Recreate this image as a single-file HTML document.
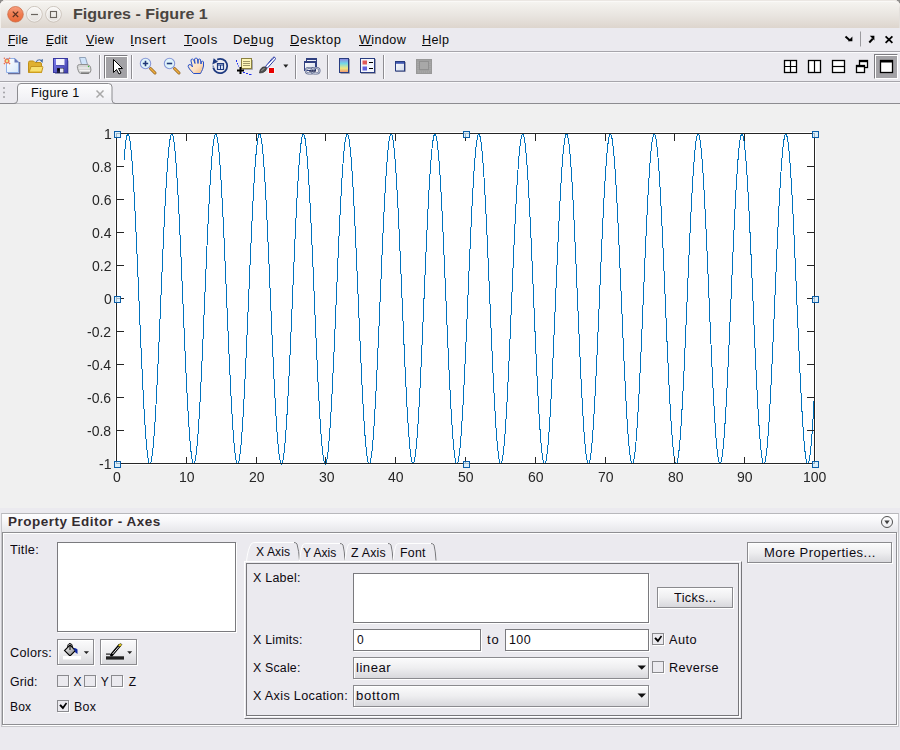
<!DOCTYPE html>
<html><head><meta charset="utf-8"><style>
html,body{margin:0;padding:0;width:900px;height:750px;overflow:hidden;background:#ebeaef;}
body{position:relative;font-family:"Liberation Sans",sans-serif;}
.t{position:absolute;line-height:1;white-space:pre;}
svg{overflow:visible}
</style></head><body>
<div style="position:absolute;left:0px;top:0px;width:8px;height:8px;background:#8e8c8a"></div>
<div style="position:absolute;left:892px;top:0px;width:8px;height:8px;background:#8e8c8a"></div>
<div style="position:absolute;left:0px;top:0px;width:900px;height:28px;background:linear-gradient(#f7f6f3,#f2f0ec 18%,#e9e5e0 55%,#ddd5cd);border-radius:6px 6px 0 0;box-shadow:inset 0 1px 0 #ebe7e3, inset 0 2px 0 #faf9f7, inset 1px 0 0 #f2efeb, inset -1px 0 0 #e4e0dc"></div>
<svg style="position:absolute;left:0;top:0" width="70" height="28">
<defs><linearGradient id="cg" x1="0" y1="0" x2="0" y2="1"><stop offset="0" stop-color="#f7a080"/><stop offset="0.5" stop-color="#f07c50"/><stop offset="1" stop-color="#e86838"/></linearGradient>
<linearGradient id="gg" x1="0" y1="0" x2="0" y2="1"><stop offset="0" stop-color="#faf9f7"/><stop offset="1" stop-color="#e4e0dc"/></linearGradient></defs>
<circle cx="15.5" cy="14.3" r="7.8" fill="url(#cg)" stroke="#c8643c" stroke-width="0.7"/>
<path d="M12.8 11.6 L18.2 17 M18.2 11.6 L12.8 17" stroke="#5a3020" stroke-width="1.2"/>
<circle cx="34.4" cy="14.3" r="7.8" fill="url(#gg)" stroke="#c4bbb2" stroke-width="0.9"/>
<circle cx="34.4" cy="14.3" r="6.9" fill="none" stroke="#fff" stroke-width="0.8" opacity="0.7"/>
<path d="M31 14.5 H38" stroke="#6a645e" stroke-width="1.2"/>
<circle cx="53.5" cy="14.3" r="7.8" fill="url(#gg)" stroke="#c4bbb2" stroke-width="0.9"/>
<circle cx="53.5" cy="14.3" r="6.9" fill="none" stroke="#fff" stroke-width="0.8" opacity="0.7"/>
<rect x="50.5" y="11.5" width="6" height="6" fill="none" stroke="#6a645e" stroke-width="1.1"/>
</svg>
<div class="t" style="left:73.30px;top:6.75px;font-size:14px;letter-spacing:0.000px;font-weight:bold;color:#4a4540;transform:scaleX(1.1472);transform-origin:0 0;">Figures - Figure 1</div>
<div style="position:absolute;left:0px;top:28px;width:900px;height:23px;background:#ebeaef"></div>
<div style="position:absolute;left:0px;top:51px;width:900px;height:1px;background:#a6a5ab"></div>
<div style="position:absolute;left:0px;top:52px;width:900px;height:1px;background:#fbfbfd"></div>
<div class="t" style="left:7.70px;top:33.84px;font-size:12px;letter-spacing:0.121px;font-weight:normal;color:#080808;transform:scaleX(1.0188);transform-origin:0 0;">File</div>
<div class="t" style="left:45.50px;top:33.84px;font-size:12px;letter-spacing:0.140px;font-weight:normal;color:#080808;transform:scaleX(1.0201);transform-origin:0 0;">Edit</div>
<div class="t" style="left:85.60px;top:33.84px;font-size:12px;letter-spacing:0.317px;font-weight:normal;color:#080808;transform:scaleX(1.0378);transform-origin:0 0;">View</div>
<div class="t" style="left:129.80px;top:33.84px;font-size:12px;letter-spacing:0.514px;font-weight:normal;color:#080808;transform:scaleX(1.0947);transform-origin:0 0;">Insert</div>
<div class="t" style="left:183.50px;top:33.84px;font-size:12px;letter-spacing:0.593px;font-weight:normal;color:#080808;transform:scaleX(1.0926);transform-origin:0 0;">Tools</div>
<div class="t" style="left:233.30px;top:33.84px;font-size:12px;letter-spacing:0.617px;font-weight:normal;color:#080808;transform:scaleX(1.0766);transform-origin:0 0;">Debug</div>
<div class="t" style="left:289.90px;top:33.84px;font-size:12px;letter-spacing:0.544px;font-weight:normal;color:#080808;transform:scaleX(1.0795);transform-origin:0 0;">Desktop</div>
<div class="t" style="left:358.70px;top:33.84px;font-size:12px;letter-spacing:0.399px;font-weight:normal;color:#080808;transform:scaleX(1.0487);transform-origin:0 0;">Window</div>
<div class="t" style="left:421.90px;top:33.84px;font-size:12px;letter-spacing:0.381px;font-weight:normal;color:#080808;transform:scaleX(1.0479);transform-origin:0 0;">Help</div>
<div style="position:absolute;left:8px;top:45px;width:7px;height:1px;background:#080808"></div>
<div style="position:absolute;left:46px;top:45px;width:6px;height:1px;background:#080808"></div>
<div style="position:absolute;left:86px;top:45px;width:8px;height:1px;background:#080808"></div>
<div style="position:absolute;left:131px;top:45px;width:3px;height:1px;background:#080808"></div>
<div style="position:absolute;left:184px;top:45px;width:8px;height:1px;background:#080808"></div>
<div style="position:absolute;left:250px;top:45px;width:7px;height:1px;background:#080808"></div>
<div style="position:absolute;left:290px;top:45px;width:9px;height:1px;background:#080808"></div>
<div style="position:absolute;left:359px;top:45px;width:13px;height:1px;background:#080808"></div>
<div style="position:absolute;left:422px;top:45px;width:9px;height:1px;background:#080808"></div>
<svg style="position:absolute;left:840px;top:30px" width="60" height="20">
<path d="M5.5 6.5 L10 10.5" stroke="#000" stroke-width="2"/>
<path d="M7.8 11.2 H12.4 V6.6 Z" fill="#000"/>
<path d="M20.5 1.5 V16.5" stroke="#9a9a9e" stroke-width="1"/>
<path d="M29.3 12.5 L32.8 8.8" stroke="#000" stroke-width="2"/>
<path d="M29.8 5.8 H34.4 V10.4 Z" fill="#000"/>
<path d="M45.6 6.4 L52.4 12.8 M52.4 6.4 L45.6 12.8" stroke="#000" stroke-width="1.8"/>
</svg>
<div style="position:absolute;left:0px;top:53px;width:900px;height:28px;background:#ebeaef"></div>
<div style="position:absolute;left:0px;top:81px;width:900px;height:1px;background:#a6a5ab"></div>
<div style="position:absolute;left:0px;top:82px;width:900px;height:1px;background:#f8f8fa"></div>
<div style="position:absolute;left:99px;top:55px;width:1px;height:24px;background:#8e8d92"></div>
<div style="position:absolute;left:100px;top:55px;width:1px;height:24px;background:#fdfdff"></div>
<div style="position:absolute;left:131px;top:55px;width:1px;height:24px;background:#8e8d92"></div>
<div style="position:absolute;left:132px;top:55px;width:1px;height:24px;background:#fdfdff"></div>
<div style="position:absolute;left:295px;top:55px;width:1px;height:24px;background:#8e8d92"></div>
<div style="position:absolute;left:296px;top:55px;width:1px;height:24px;background:#fdfdff"></div>
<div style="position:absolute;left:327px;top:55px;width:1px;height:24px;background:#8e8d92"></div>
<div style="position:absolute;left:328px;top:55px;width:1px;height:24px;background:#fdfdff"></div>
<div style="position:absolute;left:383px;top:55px;width:1px;height:24px;background:#8e8d92"></div>
<div style="position:absolute;left:384px;top:55px;width:1px;height:24px;background:#fdfdff"></div>
<div style="position:absolute;left:104px;top:55px;width:24px;height:24px;background:#a3a2a6;border-top:1px solid #7c7b80;border-left:1px solid #7c7b80;border-right:1px solid #fff;border-bottom:1px solid #fff;box-sizing:border-box;box-shadow:inset 1px 1px 0 #fff"></div>
<div style="position:absolute;left:874px;top:54px;width:24px;height:25px;background:#a3a2a6;border-top:1px solid #7c7b80;border-left:1px solid #7c7b80;border-right:1px solid #fff;border-bottom:1px solid #fff;box-sizing:border-box;box-shadow:inset 1px 1px 0 #fff"></div>
<svg style="position:absolute;left:0;top:52px" width="900" height="30">
<defs>
<linearGradient id="pg" x1="0" y1="0" x2="1" y2="1"><stop offset="0" stop-color="#ffffff"/><stop offset="1" stop-color="#d8e8fa"/></linearGradient>
<linearGradient id="fl" x1="0" y1="0" x2="1" y2="1"><stop offset="0" stop-color="#8080f0"/><stop offset="1" stop-color="#4040a8"/></linearGradient>
<linearGradient id="cb" x1="0" y1="0" x2="0" y2="1"><stop offset="0" stop-color="#9080e0"/><stop offset="0.35" stop-color="#70d8e8"/><stop offset="0.7" stop-color="#f0e880"/><stop offset="1" stop-color="#f09070"/></linearGradient>
<linearGradient id="wb" x1="0" y1="0" x2="1" y2="1"><stop offset="0" stop-color="#ffffff"/><stop offset="1" stop-color="#d0d8e8"/></linearGradient>
</defs>
<!-- new file -->
<path d="M8 21.5 H19.5 V10" stroke="#6a6e98" stroke-width="1.6" fill="none"/>
<path d="M6.5 6.5 H15 L18.5 10 V20.5 H6.5 Z" fill="url(#pg)" stroke="#90b0e8"/>
<path d="M14.5 6 V10.5 H19 Z" fill="#6676b8"/>
<circle cx="7" cy="9" r="1.9" fill="#e8e890" stroke="#f07850" stroke-width="1.4"/>
<circle cx="4.4" cy="6.3" r="0.8" fill="#e87050"/><circle cx="9.6" cy="6.3" r="0.8" fill="#e87050"/>
<circle cx="4.4" cy="11.6" r="0.8" fill="#e87050"/><circle cx="9.6" cy="11.6" r="0.8" fill="#e87050"/>
<!-- open folder -->
<path d="M28.5 20.5 V10.5 Q28.5 9 30 9 H33.5 L35 10.5 H40 Q41.5 10.5 41.5 12 V20.5 Z" fill="#e0b030" stroke="#c09018"/>
<path d="M29 20.5 L31 14.5 H42.5 Q43 14.5 42.8 15.5 L41.5 20.5 Z" fill="#f8e070" stroke="#c49420"/>
<path d="M30 20 H41" stroke="#d8a820" stroke-width="1"/>
<path d="M36 10 Q38.5 6.5 41.5 8.5" stroke="#5878a8" stroke-width="1.1" fill="none"/>
<path d="M40 8.5 L43 7 L42.5 11 Z" fill="#4068a0"/>
<!-- save -->
<path d="M55 21.5 H68 V8.5" stroke="#6a6e98" stroke-width="1.2" fill="none" opacity="0.7"/>
<rect x="53.5" y="6.5" width="14" height="14" fill="url(#fl)" stroke="#3838a0"/>
<rect x="56" y="7" width="8.5" height="6.5" fill="#f4f4fc"/>
<path d="M56 13.5 H64.5" stroke="#5050b0"/>
<rect x="57" y="16" width="7" height="5" fill="#202040"/>
<rect x="60" y="16.5" width="3.5" height="4" fill="#e8e8f4"/>
<rect x="57.5" y="16.5" width="2" height="2" fill="#000"/>
<!-- print -->
<path d="M79.5 5.5 L85.5 5.5 L87.5 12.5 L81.5 12.5 Z" fill="#d0e4fa" stroke="#8898b0" stroke-width="0.9"/>
<path d="M78 13 Q77 14 77.5 16.5 L79 20.5 Q80 21.5 82 21.5 H88 Q91 21 91 18 L90.5 15 Q90 13 87 12.5 H81 Q79 12.5 78 13 Z" fill="#d4d4d4" stroke="#8a8a8a" stroke-width="0.9"/>
<path d="M79 16 H89.5 M79.5 18.5 H90" stroke="#f4f4f4" stroke-width="1"/>
<path d="M81 21 H89" stroke="#606060" stroke-width="1"/>
<circle cx="88.5" cy="14.5" r="0.7" fill="#30c030"/>
<!-- pointer arrow -->
<path d="M113.5 7.5 V20.5 L116.5 17.5 L119 22 L121 21 L118.5 16.5 H122.5 Z" fill="#fff" stroke="#000" stroke-width="1"/>
<!-- zoom in -->
<path d="M150.5 16.5 L155 21" stroke="#906020" stroke-width="3" stroke-linecap="round"/>
<path d="M150.5 16.5 L155 21" stroke="#f0b040" stroke-width="1.6" stroke-linecap="round"/>
<circle cx="145.5" cy="11.5" r="5.2" fill="#e0f4fa" stroke="#8898d8" stroke-width="1.1"/>
<path d="M142.8 11.5 H148.2 M145.5 8.8 V14.2" stroke="#203878" stroke-width="1.6"/>
<!-- zoom out -->
<path d="M174.5 16.5 L179 21" stroke="#906020" stroke-width="3" stroke-linecap="round"/>
<path d="M174.5 16.5 L179 21" stroke="#f0b040" stroke-width="1.6" stroke-linecap="round"/>
<circle cx="169.5" cy="11.5" r="5.2" fill="#e0f4fa" stroke="#8898d8" stroke-width="1.1"/>
<path d="M166.8 11.5 H172.2" stroke="#203878" stroke-width="1.6"/>
<!-- pan hand -->
<defs><linearGradient id="hd" x1="0" y1="0" x2="1" y2="1"><stop offset="0" stop-color="#fff4dc"/><stop offset="0.6" stop-color="#fde0c4"/><stop offset="1" stop-color="#f0b878"/></linearGradient></defs>
<path d="M193.5 21.5 L189.5 17 L188.2 14.5 L188.5 13 L190 12.5 L191.5 13.5 L192.5 15 L191 9 L191.2 7.5 L192.5 7 L193.8 8 L195 11.5 L194.5 7 L195.3 6.2 L196.8 6.2 L197.5 7 L198 11.5 L198.3 7.5 L199.3 7 L200.5 7.5 L201 12 L201.5 9.5 L202.5 9 L203.5 10 L203.5 14 L202.5 17.5 L201.5 19.5 L200.5 21.5 Z" fill="url(#hd)" stroke="#2850c8" stroke-width="1" stroke-linejoin="round"/>
<!-- rotate -->
<path d="M217.2 7.6 A7.1 7.1 0 1 1 213.3 15.8" stroke="#1e3a80" stroke-width="1.8" fill="none"/>
<path d="M213.6 15.8 A7.1 7.1 0 0 1 213.1 13.5" stroke="#8090b8" stroke-width="1.6" fill="none"/>
<path d="M213.7 6.3 L218 9.8 L212.3 12.6 Z" fill="#1e3a80"/>
<path d="M217.5 11.5 H223.5 V17.5 H217.5 Z" fill="#dce6f8" stroke="#1e3a80" stroke-width="1.2"/>
<path d="M218 13 H223 M220.5 13 V17.5" stroke="#1e3a80" stroke-width="1"/>
<!-- data cursor -->
<path d="M243 17.5 H252.5 V8" stroke="#a8a8b0" stroke-width="1" fill="none"/>
<rect x="241.5" y="6.5" width="10" height="10" fill="#fdf6b8" stroke="#8a8040"/>
<path d="M243 9.5 H250 M243 11.5 H250 M243 13.5 H250" stroke="#a09868"/>
<path d="M236.5 8 V10 M237.5 11 V12.5 M238.5 13.5 V14.5" stroke="#2030f0" stroke-width="1"/>
<path d="M243 20.5 H245 M246 21.5 H248 M249 22.5 H251.5" stroke="#2030f0" stroke-width="1"/>
<path d="M237 18.5 H244 M240.5 15 V22" stroke="#000" stroke-width="2"/>
<!-- brush -->
<path d="M265.5 14.5 L273 5.5 Q274 4.5 275 5.5 Q276 6.5 275 7.5 L267.5 16 Z" fill="#ffffff" stroke="#2838a0" stroke-width="1"/>
<path d="M266.5 13.5 L274 6" stroke="#6878d0" stroke-width="0.9"/>
<path d="M259.5 21 Q259.5 17.5 262 15.5 Q264.5 14 266.5 16 Q267 18.5 263 20.5 Z" fill="#505050" stroke="#303030" stroke-width="0.7"/>
<path d="M261.5 19 Q262.5 17 264.5 16.5" stroke="#c0c0c0" stroke-width="0.7" fill="none"/>
<rect x="268.5" y="15.5" width="6" height="6" fill="#fff"/>
<rect x="269" y="16" width="5" height="5" fill="#e80000"/>
<path d="M283.3 12.6 H288.3 L285.8 15.8 Z" fill="#222"/>
<!-- link -->
<rect x="306.5" y="6.5" width="10" height="9" fill="url(#wb)" stroke="#304080"/>
<rect x="306.5" y="6.5" width="10" height="1.5" fill="#304080"/>
<rect x="304.5" y="9.5" width="11" height="9" fill="url(#wb)" stroke="#304080"/>
<rect x="304.5" y="9.5" width="11" height="1.5" fill="#304080"/>
<rect x="305.8" y="16" width="8" height="5.5" rx="2.7" fill="none" stroke="#5a6488" stroke-width="2"/>
<rect x="305.8" y="16" width="8" height="5.5" rx="2.7" fill="none" stroke="#d8e0ee" stroke-width="0.8"/>
<rect x="311.5" y="16" width="8" height="5.5" rx="2.7" fill="none" stroke="#5a6488" stroke-width="2"/>
<rect x="311.5" y="16" width="8" height="5.5" rx="2.7" fill="none" stroke="#d8e0ee" stroke-width="0.8"/>
<path d="M309 19 H316" stroke="#202850" stroke-width="1.2"/>
<!-- colorbar -->
<path d="M340.5 21.5 H349.5 V7" stroke="#a0a0b0" stroke-width="1" fill="none"/>
<rect x="339.5" y="6.5" width="9" height="14" fill="url(#cb)" stroke="#283c80"/>
<!-- legend -->
<path d="M361 21.5 H375.5 V7" stroke="#a0a0b0" stroke-width="1" fill="none"/>
<rect x="360.5" y="6.5" width="14" height="14" fill="#f4f6fc" stroke="#283c80"/>
<rect x="362.5" y="8.5" width="4.5" height="4" fill="#e05858"/>
<rect x="362.5" y="14.5" width="4.5" height="4" fill="#6060e0"/>
<path d="M369 10.5 H373 M369 16.5 H373" stroke="#000" stroke-width="1.2"/>
<!-- dock window -->
<path d="M396 19.5 H405.5 V10" stroke="#a0a0b0" stroke-width="1" fill="none"/>
<rect x="395.5" y="9.5" width="9" height="9.5" fill="url(#wb)" stroke="#283c80"/>
<rect x="396" y="10" width="8" height="1.8" fill="#4058b0"/>
<!-- gray -->
<rect x="416.5" y="7.5" width="15" height="14" fill="#a0a0a0" stroke="#989898"/>
<rect x="419.5" y="9.5" width="9" height="8" fill="#a8a8a8" stroke="#909090"/>
<path d="M418 10 V19 M430 10 V19 M418 20 H430" stroke="#b0b0b0" stroke-width="0.8" stroke-dasharray="1 1"/>
<!-- layout buttons -->
<rect x="784.5" y="8.5" width="12" height="12" fill="#fff" stroke="#000" stroke-width="1.3"/>
<path d="M790.5 8.5 V20.5 M784.5 14.5 H796.5" stroke="#000" stroke-width="1.2"/>
<rect x="808.5" y="8.5" width="12" height="12" fill="#fff" stroke="#000" stroke-width="1.3"/>
<path d="M814.5 8.5 V20.5" stroke="#000" stroke-width="1.2"/>
<rect x="832.5" y="8.5" width="12" height="12" fill="#fff" stroke="#000" stroke-width="1.3"/>
<path d="M832.5 14.5 H844.5" stroke="#000" stroke-width="1.2"/>
<rect x="859.5" y="8.5" width="8" height="7" fill="#fff" stroke="#000" stroke-width="1.3"/>
<rect x="859" y="8" width="9" height="2.2" fill="#000"/>
<rect x="856.5" y="13.5" width="8" height="7" fill="#fff" stroke="#000" stroke-width="1.3"/>
<rect x="856" y="13" width="9" height="2.2" fill="#000"/>
<rect x="880.5" y="8.5" width="12" height="12" fill="#fff" stroke="#000" stroke-width="1.3"/>
<rect x="880" y="8" width="13" height="2.5" fill="#000"/>
</svg>
<div style="position:absolute;left:0px;top:83px;width:900px;height:20px;background:#ebeaef"></div>
<div style="position:absolute;left:0px;top:103px;width:900px;height:1px;background:#8c8c90"></div>
<svg style="position:absolute;left:0;top:82px" width="120" height="22">
<circle cx="4" cy="6" r="1" fill="#a0a0a4"/><circle cx="4" cy="10.5" r="1" fill="#a0a0a4"/><circle cx="4" cy="15" r="1" fill="#a0a0a4"/>
<defs><linearGradient id="tg" x1="0" y1="0" x2="0" y2="1"><stop offset="0" stop-color="#fdfdfe"/><stop offset="1" stop-color="#eeeef2"/></linearGradient></defs>
<path d="M14 21.5 Q17.5 21.5 17.5 18 V5 Q17.5 1.5 21 1.5 H108.5 Q112 1.5 112 5 V18 Q112 21.5 115.5 21.5" fill="url(#tg)" stroke="#8c8c90"/>
<path d="M96.5 8.5 L103.5 15.5 M103.5 8.5 L96.5 15.5" stroke="#a8a8a8" stroke-width="1.5"/>
</svg>
<div class="t" style="left:30.70px;top:87.44px;font-size:12px;letter-spacing:0.290px;font-weight:normal;color:#080808;transform:scaleX(1.0479);transform-origin:0 0;">Figure 1</div>
<div style="position:absolute;left:0px;top:104px;width:900px;height:404px;background:#f0f0f0"></div>
<div style="position:absolute;left:115px;top:132px;width:701px;height:333px;background:#fff"></div>
<svg style="position:absolute;left:0;top:0" width="900" height="510">
<polyline points="123.98,160.16 124.33,155.92 124.67,152.03 125.02,148.50 125.36,145.33 125.71,142.55 126.05,140.15 126.40,138.13 126.74,136.51 127.09,135.29 127.44,134.47 127.78,134.06 128.13,134.04 128.47,134.44 128.82,135.23 129.16,136.43 129.51,138.02 129.85,140.01 130.20,142.39 130.54,145.15 130.89,148.29 131.24,151.79 131.58,155.66 131.93,159.88 132.27,164.44 132.62,169.33 132.96,174.54 133.31,180.05 133.65,185.86 134.00,191.94 134.35,198.28 134.69,204.87 135.04,211.69 135.38,218.73 135.73,225.96 136.07,233.37 136.42,240.94 136.76,248.65 137.11,256.49 137.45,264.43 137.80,272.45 138.15,280.54 138.49,288.68 138.84,296.84 139.18,305.01 139.53,313.16 139.87,321.27 140.22,329.34 140.56,337.32 140.91,345.22 141.26,353.00 141.60,360.65 141.95,368.14 142.29,375.47 142.64,382.61 142.98,389.55 143.33,396.26 143.67,402.74 144.02,408.96 144.37,414.91 144.71,420.58 145.06,425.95 145.40,431.01 145.75,435.75 146.09,440.15 146.44,444.20 146.78,447.90 147.13,451.24 147.47,454.20 147.82,456.78 148.17,458.98 148.51,460.78 148.86,462.19 149.20,463.19 149.55,463.80 149.89,464.00 150.24,463.80 150.58,463.19 150.93,462.18 151.28,460.77 151.62,458.97 151.97,456.77 152.31,454.19 152.66,451.22 153.00,447.89 153.35,444.19 153.69,440.13 154.04,435.73 154.38,430.99 154.73,425.93 155.08,420.56 155.42,414.89 155.77,408.93 156.11,402.71 156.46,396.23 156.80,389.52 157.15,382.58 157.49,375.44 157.84,368.11 158.19,360.61 158.53,352.96 158.88,345.18 159.22,337.29 159.57,329.30 159.91,321.24 160.26,313.12 160.60,304.97 160.95,296.80 161.30,288.64 161.64,280.51 161.99,272.42 162.33,264.39 162.68,256.45 163.02,248.62 163.37,240.90 163.71,233.33 164.06,225.92 164.40,218.69 164.75,211.66 165.10,204.84 165.44,198.25 165.79,191.91 166.13,185.83 166.48,180.03 166.82,174.52 167.17,169.31 167.51,164.42 167.86,159.86 168.21,155.64 168.55,151.78 168.90,148.27 169.24,145.14 169.59,142.38 169.93,140.00 170.28,138.01 170.62,136.42 170.97,135.23 171.31,134.43 171.66,134.04 172.01,134.06 172.35,134.48 172.70,135.30 173.04,136.52 173.39,138.14 173.73,140.16 174.08,142.56 174.42,145.35 174.77,148.51 175.12,152.04 175.46,155.93 175.81,160.18 176.15,164.76 176.50,169.67 176.84,174.90 177.19,180.43 177.53,186.25 177.88,192.35 178.23,198.71 178.57,205.32 178.92,212.16 179.26,219.20 179.61,226.45 179.95,233.87 180.30,241.45 180.64,249.17 180.99,257.02 181.33,264.96 181.68,272.99 182.03,281.09 182.37,289.22 182.72,297.39 183.06,305.55 183.41,313.70 183.75,321.82 184.10,329.87 184.44,337.86 184.79,345.74 185.14,353.52 185.48,361.15 185.83,368.64 186.17,375.96 186.52,383.08 186.86,390.01 187.21,396.70 187.55,403.16 187.90,409.37 188.24,415.30 188.59,420.95 188.94,426.30 189.28,431.34 189.63,436.05 189.97,440.43 190.32,444.46 190.66,448.14 191.01,451.45 191.35,454.38 191.70,456.94 192.05,459.11 192.39,460.89 192.74,462.27 193.08,463.25 193.43,463.82 193.77,464.00 194.12,463.77 194.46,463.14 194.81,462.10 195.16,460.66 195.50,458.83 195.85,456.61 196.19,454.00 196.54,451.01 196.88,447.65 197.23,443.93 197.57,439.85 197.92,435.42 198.26,430.66 198.61,425.58 198.96,420.19 199.30,414.50 199.65,408.52 199.99,402.28 200.34,395.79 200.68,389.06 201.03,382.11 201.37,374.95 201.72,367.61 202.07,360.11 202.41,352.45 202.76,344.66 203.10,336.76 203.45,328.76 203.79,320.70 204.14,312.58 204.48,304.42 204.83,296.26 205.17,288.10 205.52,279.96 205.87,271.88 206.21,263.86 206.56,255.92 206.90,248.10 207.25,240.39 207.59,232.83 207.94,225.43 208.28,218.22 208.63,211.20 208.98,204.39 209.32,197.82 209.67,191.49 210.01,185.43 210.36,179.65 210.70,174.16 211.05,168.97 211.39,164.11 211.74,159.57 212.09,155.37 212.43,151.53 212.78,148.05 213.12,144.94 213.47,142.20 213.81,139.85 214.16,137.89 214.50,136.33 214.85,135.16 215.19,134.39 215.54,134.03 215.89,134.07 216.23,134.52 216.58,135.37 216.92,136.62 217.27,138.26 217.61,140.30 217.96,142.73 218.30,145.55 218.65,148.74 219.00,152.29 219.34,156.21 219.69,160.47 220.03,165.08 220.38,170.01 220.72,175.26 221.07,180.81 221.41,186.65 221.76,192.77 222.10,199.15 222.45,205.77 222.80,212.62 223.14,219.68 223.49,226.94 223.83,234.37 224.18,241.96 224.52,249.69 224.87,257.55 225.21,265.50 225.56,273.53 225.91,281.63 226.25,289.77 226.60,297.93 226.94,306.10 227.29,314.25 227.63,322.36 227.98,330.41 228.32,338.39 228.67,346.27 229.02,354.03 229.36,361.66 229.71,369.14 230.05,376.44 230.40,383.55 230.74,390.46 231.09,397.14 231.43,403.59 231.78,409.77 232.12,415.69 232.47,421.32 232.82,426.65 233.16,431.66 233.51,436.36 233.85,440.71 234.20,444.72 234.54,448.37 234.89,451.66 235.23,454.57 235.58,457.10 235.93,459.24 236.27,460.99 236.62,462.34 236.96,463.30 237.31,463.85 237.65,464.00 238.00,463.74 238.34,463.08 238.69,462.02 239.03,460.55 239.38,458.70 239.73,456.45 240.07,453.81 240.42,450.80 240.76,447.41 241.11,443.66 241.45,439.56 241.80,435.11 242.14,430.33 242.49,425.23 242.84,419.81 243.18,414.11 243.53,408.12 243.87,401.86 244.22,395.35 244.56,388.60 244.91,381.64 245.25,374.47 245.60,367.12 245.95,359.60 246.29,351.93 246.64,344.13 246.98,336.22 247.33,328.22 247.67,320.15 248.02,312.03 248.36,303.88 248.71,295.71 249.05,287.55 249.40,279.42 249.75,271.34 250.09,263.32 250.44,255.40 250.78,247.58 251.13,239.88 251.47,232.33 251.82,224.94 252.16,217.74 252.51,210.73 252.86,203.94 253.20,197.39 253.55,191.08 253.89,185.04 254.24,179.27 254.58,173.80 254.93,168.64 255.27,163.79 255.62,159.28 255.96,155.11 256.31,151.29 256.66,147.83 257.00,144.74 257.35,142.03 257.69,139.71 258.04,137.78 258.38,136.24 258.73,135.10 259.07,134.36 259.42,134.02 259.77,134.09 260.11,134.56 260.46,135.44 260.80,136.71 261.15,138.39 261.49,140.46 261.84,142.91 262.18,145.75 262.53,148.96 262.88,152.54 263.22,156.48 263.57,160.77 263.91,165.40 264.26,170.35 264.60,175.62 264.95,181.20 265.29,187.06 265.64,193.19 265.98,199.59 266.33,206.22 266.68,213.09 267.02,220.16 267.37,227.43 267.71,234.88 268.06,242.48 268.40,250.22 268.75,258.07 269.09,266.03 269.44,274.07 269.79,282.17 270.13,290.32 270.48,298.48 270.82,306.65 271.17,314.79 271.51,322.90 271.86,330.95 272.20,338.92 272.55,346.79 272.89,354.55 273.24,362.17 273.59,369.63 273.93,376.92 274.28,384.02 274.62,390.92 274.97,397.58 275.31,404.01 275.66,410.18 276.00,416.07 276.35,421.68 276.70,426.99 277.04,431.99 277.39,436.66 277.73,440.99 278.08,444.98 278.42,448.60 278.77,451.86 279.11,454.75 279.46,457.25 279.81,459.37 280.15,461.09 280.50,462.42 280.84,463.35 281.19,463.87 281.53,463.99 281.88,463.71 282.22,463.02 282.57,461.93 282.91,460.44 283.26,458.56 283.61,456.28 283.95,453.62 284.30,450.58 284.64,447.17 284.99,443.40 285.33,439.27 285.68,434.80 286.02,430.00 286.37,424.87 286.72,419.44 287.06,413.71 287.41,407.70 287.75,401.43 288.10,394.90 288.44,388.14 288.79,381.16 289.13,373.98 289.48,366.62 289.82,359.09 290.17,351.41 290.52,343.61 290.86,335.69 291.21,327.69 291.55,319.61 291.90,311.49 292.24,303.33 292.59,295.16 292.93,287.01 293.28,278.88 293.63,270.80 293.97,262.79 294.32,254.87 294.66,247.06 295.01,239.37 295.35,231.83 295.70,224.46 296.04,217.26 296.39,210.27 296.74,203.50 297.08,196.96 297.43,190.67 297.77,184.64 298.12,178.90 298.46,173.45 298.81,168.30 299.15,163.48 299.50,158.99 299.84,154.84 300.19,151.04 300.54,147.61 300.88,144.55 301.23,141.87 301.57,139.57 301.92,137.66 302.26,136.15 302.61,135.03 302.95,134.32 303.30,134.01 303.65,134.11 303.99,134.61 304.34,135.51 304.68,136.81 305.03,138.51 305.37,140.61 305.72,143.09 306.06,145.95 306.41,149.19 306.75,152.80 307.10,156.76 307.45,161.07 307.79,165.72 308.14,170.70 308.48,175.99 308.83,181.58 309.17,187.46 309.52,193.61 309.86,200.02 310.21,206.68 310.56,213.56 310.90,220.64 311.25,227.92 311.59,235.38 311.94,242.99 312.28,250.74 312.63,258.60 312.97,266.57 313.32,274.61 313.66,282.72 314.01,290.86 314.36,299.03 314.70,307.19 315.05,315.34 315.39,323.44 315.74,331.48 316.08,339.45 316.43,347.31 316.77,355.06 317.12,362.67 317.47,370.12 317.81,377.40 318.16,384.49 318.50,391.37 318.85,398.02 319.19,404.43 319.54,410.58 319.88,416.46 320.23,422.05 320.58,427.34 320.92,432.31 321.27,436.96 321.61,441.27 321.96,445.23 322.30,448.83 322.65,452.07 322.99,454.93 323.34,457.41 323.68,459.50 324.03,461.20 324.38,462.50 324.72,463.40 325.07,463.89 325.41,463.99 325.76,463.67 326.10,462.96 326.45,461.84 326.79,460.33 327.14,458.42 327.49,456.12 327.83,453.43 328.18,450.37 328.52,446.93 328.87,443.13 329.21,438.98 329.56,434.49 329.90,429.66 330.25,424.52 330.59,419.07 330.94,413.32 331.29,407.29 331.63,401.00 331.98,394.46 332.32,387.68 332.67,380.69 333.01,373.49 333.36,366.12 333.70,358.58 334.05,350.89 334.40,343.08 334.74,335.16 335.09,327.15 335.43,319.07 335.78,310.94 336.12,302.78 336.47,294.62 336.81,286.46 337.16,278.33 337.51,270.26 337.85,262.26 338.20,254.34 338.54,246.54 338.89,238.86 339.23,231.33 339.58,223.97 339.92,216.79 340.27,209.81 340.61,203.05 340.96,196.53 341.31,190.25 341.65,184.25 342.00,178.52 342.34,173.09 342.69,167.97 343.03,163.17 343.38,158.70 343.72,154.57 344.07,150.80 344.42,147.40 344.76,144.36 345.11,141.70 345.45,139.43 345.80,137.55 346.14,136.06 346.49,134.97 346.83,134.29 347.18,134.01 347.52,134.13 347.87,134.66 348.22,135.59 348.56,136.92 348.91,138.64 349.25,140.76 349.60,143.27 349.94,146.16 350.29,149.42 350.63,153.05 350.98,157.04 351.33,161.37 351.67,166.04 352.02,171.04 352.36,176.35 352.71,181.96 353.05,187.86 353.40,194.03 353.74,200.46 354.09,207.13 354.44,214.02 354.78,221.13 355.13,228.42 355.47,235.88 355.82,243.51 356.16,251.26 356.51,259.14 356.85,267.11 357.20,275.16 357.54,283.26 357.89,291.41 358.24,299.57 358.58,307.74 358.93,315.88 359.27,323.98 359.62,332.02 359.96,339.98 360.31,347.84 360.65,355.58 361.00,363.18 361.35,370.62 361.69,377.89 362.04,384.96 362.38,391.82 362.73,398.46 363.07,404.85 363.42,410.98 363.76,416.84 364.11,422.41 364.45,427.68 364.80,432.63 365.15,437.26 365.49,441.55 365.84,445.48 366.18,449.06 366.53,452.27 366.87,455.11 367.22,457.56 367.56,459.62 367.91,461.30 368.26,462.57 368.60,463.44 368.95,463.91 369.29,463.98 369.64,463.64 369.98,462.90 370.33,461.75 370.67,460.21 371.02,458.28 371.37,455.95 371.71,453.24 372.06,450.15 372.40,446.69 372.75,442.87 373.09,438.69 373.44,434.18 373.78,429.33 374.13,424.16 374.47,418.69 374.82,412.92 375.17,406.88 375.51,400.57 375.86,394.01 376.20,387.22 376.55,380.21 376.89,373.01 377.24,365.62 377.58,358.07 377.93,350.37 378.28,342.55 378.62,334.62 378.97,326.61 379.31,318.53 379.66,310.39 380.00,302.24 380.35,294.07 380.69,285.91 381.04,277.79 381.38,269.72 381.73,261.72 382.08,253.82 382.42,246.02 382.77,238.35 383.11,230.83 383.46,223.48 383.80,216.32 384.15,209.35 384.49,202.61 384.84,196.10 385.19,189.84 385.53,183.86 385.88,178.15 386.22,172.74 386.57,167.64 386.91,162.86 387.26,158.41 387.60,154.31 387.95,150.56 388.30,147.18 388.64,144.17 388.99,141.54 389.33,139.29 389.68,137.44 390.02,135.98 390.37,134.92 390.71,134.26 391.06,134.00 391.40,134.15 391.75,134.71 392.10,135.66 392.44,137.02 392.79,138.77 393.13,140.92 393.48,143.45 393.82,146.36 394.17,149.65 394.51,153.31 394.86,157.32 395.21,161.67 395.55,166.37 395.90,171.39 396.24,176.72 396.59,182.35 396.93,188.27 397.28,194.46 397.62,200.90 397.97,207.58 398.31,214.49 398.66,221.61 399.01,228.91 399.35,236.39 399.70,244.02 400.04,251.79 400.39,259.67 400.73,267.64 401.08,275.70 401.42,283.81 401.77,291.96 402.12,300.12 402.46,308.28 402.81,316.42 403.15,324.52 403.50,332.56 403.84,340.51 404.19,348.36 404.53,356.09 404.88,363.68 405.23,371.11 405.57,378.37 405.92,385.43 406.26,392.27 406.61,398.89 406.95,405.27 407.30,411.39 407.64,417.23 407.99,422.78 408.33,428.02 408.68,432.95 409.03,437.56 409.37,441.82 409.72,445.73 410.06,449.29 410.41,452.47 410.75,455.28 411.10,457.71 411.44,459.75 411.79,461.39 412.14,462.64 412.48,463.49 412.83,463.93 413.17,463.97 413.52,463.60 413.86,462.83 414.21,461.66 414.55,460.09 414.90,458.13 415.24,455.78 415.59,453.04 415.94,449.93 416.28,446.44 416.63,442.60 416.97,438.40 417.32,433.86 417.66,428.99 418.01,423.81 418.35,418.31 418.70,412.53 419.05,406.46 419.39,400.14 419.74,393.56 420.08,386.76 420.43,379.74 420.77,372.52 421.12,365.12 421.46,357.56 421.81,349.85 422.16,342.02 422.50,334.09 422.85,326.07 423.19,317.98 423.54,309.85 423.88,301.69 424.23,293.52 424.57,285.37 424.92,277.25 425.26,269.18 425.61,261.19 425.96,253.29 426.30,245.50 426.65,237.84 426.99,230.34 427.34,223.00 427.68,215.84 428.03,208.89 428.37,202.16 428.72,195.67 429.07,189.43 429.41,183.46 429.76,177.78 430.10,172.39 430.45,167.31 430.79,162.55 431.14,158.13 431.48,154.05 431.83,150.33 432.17,146.97 432.52,143.98 432.87,141.37 433.21,139.15 433.56,137.32 433.90,135.89 434.25,134.86 434.59,134.23 434.94,134.00 435.28,134.18 435.63,134.76 435.98,135.74 436.32,137.12 436.67,138.90 437.01,141.08 437.36,143.63 437.70,146.57 438.05,149.89 438.39,153.56 438.74,157.60 439.09,161.98 439.43,166.69 439.78,171.73 440.12,177.09 440.47,182.74 440.81,188.67 441.16,194.88 441.50,201.34 441.85,208.04 442.19,214.96 442.54,222.09 442.89,229.41 443.23,236.90 443.58,244.54 443.92,252.31 444.27,260.20 444.61,268.18 444.96,276.24 445.30,284.35 445.65,292.50 446.00,300.67 446.34,308.83 446.69,316.97 447.03,325.06 447.38,333.09 447.72,341.04 448.07,348.88 448.41,356.60 448.76,364.18 449.10,371.60 449.45,378.84 449.80,385.89 450.14,392.72 450.49,399.33 450.83,405.69 451.18,411.79 451.52,417.61 451.87,423.14 452.21,428.36 452.56,433.27 452.91,437.85 453.25,442.09 453.60,445.98 453.94,449.51 454.29,452.67 454.63,455.46 454.98,457.86 455.32,459.87 455.67,461.49 456.02,462.71 456.36,463.53 456.71,463.94 457.05,463.96 457.40,463.56 457.74,462.77 458.09,461.57 458.43,459.98 458.78,457.99 459.12,455.61 459.47,452.85 459.82,449.71 460.16,446.20 460.51,442.33 460.85,438.11 461.20,433.55 461.54,428.66 461.89,423.45 462.23,417.94 462.58,412.13 462.93,406.05 463.27,399.71 463.62,393.11 463.96,386.29 464.31,379.26 464.65,372.03 465.00,364.62 465.34,357.05 465.69,349.33 466.03,341.50 466.38,333.55 466.73,325.53 467.07,317.44 467.42,309.30 467.76,301.14 468.11,292.98 468.45,284.82 468.80,276.71 469.14,268.65 469.49,260.66 469.84,252.76 470.18,244.98 470.53,237.34 470.87,229.84 471.22,222.51 471.56,215.37 471.91,208.44 472.25,201.72 472.60,195.25 472.95,189.03 473.29,183.07 473.64,177.41 473.98,172.04 474.33,166.98 474.67,162.24 475.02,157.84 475.36,153.79 475.71,150.09 476.05,146.76 476.40,143.79 476.75,141.21 477.09,139.02 477.44,137.22 477.78,135.81 478.13,134.80 478.47,134.20 478.82,134.00 479.16,134.20 479.51,134.81 479.86,135.82 480.20,137.23 480.55,139.04 480.89,141.23 481.24,143.82 481.58,146.78 481.93,150.12 482.27,153.82 482.62,157.88 482.96,162.28 483.31,167.02 483.66,172.08 484.00,177.46 484.35,183.13 484.69,189.08 485.04,195.30 485.38,201.78 485.73,208.50 486.07,215.43 486.42,222.58 486.77,229.91 487.11,237.40 487.46,245.05 487.80,252.83 488.15,260.73 488.49,268.72 488.84,276.78 489.18,284.90 489.53,293.05 489.88,301.22 490.22,309.38 490.57,317.51 490.91,325.60 491.26,333.63 491.60,341.57 491.95,349.40 492.29,357.11 492.64,364.68 492.98,372.09 493.33,379.32 493.68,386.36 494.02,393.17 494.37,399.76 494.71,406.10 495.06,412.18 495.40,417.99 495.75,423.50 496.09,428.70 496.44,433.59 496.79,438.15 497.13,442.36 497.48,446.23 497.82,449.74 498.17,452.87 498.51,455.63 498.86,458.01 499.20,459.99 499.55,461.58 499.89,462.78 500.24,463.57 500.59,463.96 500.93,463.94 501.28,463.52 501.62,462.70 501.97,461.48 502.31,459.85 502.66,457.84 503.00,455.43 503.35,452.65 503.70,449.48 504.04,445.95 504.39,442.06 504.73,437.81 505.08,433.23 505.42,428.32 505.77,423.09 506.11,417.56 506.46,411.73 506.81,405.63 507.15,399.27 507.50,392.66 507.84,385.83 508.19,378.78 508.53,371.54 508.88,364.11 509.22,356.53 509.57,348.81 509.91,340.97 510.26,333.02 510.61,324.99 510.95,316.89 511.30,308.76 511.64,300.60 511.99,292.43 512.33,284.28 512.68,276.17 513.02,268.11 513.37,260.13 513.72,252.24 514.06,244.47 514.41,236.83 514.75,229.34 515.10,222.03 515.44,214.90 515.79,207.98 516.13,201.28 516.48,194.82 516.82,188.62 517.17,182.69 517.52,177.04 517.86,171.69 518.21,166.65 518.55,161.94 518.90,157.56 519.24,153.53 519.59,149.85 519.93,146.55 520.28,143.61 520.63,141.05 520.97,138.89 521.32,137.11 521.66,135.73 522.01,134.75 522.35,134.17 522.70,134.00 523.04,134.23 523.39,134.87 523.74,135.90 524.08,137.34 524.43,139.17 524.77,141.40 525.12,144.01 525.46,147.00 525.81,150.36 526.15,154.08 526.50,158.16 526.84,162.59 527.19,167.35 527.54,172.43 527.88,177.83 528.23,183.52 528.57,189.49 528.92,195.73 529.26,202.22 529.61,208.95 529.95,215.91 530.30,223.06 530.65,230.40 530.99,237.91 531.34,245.57 531.68,253.36 532.03,261.26 532.37,269.26 532.72,277.32 533.06,285.44 533.41,293.60 533.75,301.76 534.10,309.92 534.45,318.05 534.79,326.14 535.14,334.16 535.48,342.09 535.83,349.92 536.17,357.63 536.52,365.18 536.86,372.58 537.21,379.80 537.56,386.82 537.90,393.62 538.25,400.20 538.59,406.52 538.94,412.58 539.28,418.36 539.63,423.85 539.97,429.04 540.32,433.90 540.67,438.44 541.01,442.63 541.36,446.48 541.70,449.96 542.05,453.07 542.39,455.80 542.74,458.15 543.08,460.11 543.43,461.68 543.77,462.84 544.12,463.61 544.47,463.97 544.81,463.93 545.16,463.48 545.50,462.63 545.85,461.38 546.19,459.73 546.54,457.69 546.88,455.26 547.23,452.45 547.58,449.26 547.92,445.70 548.27,441.78 548.61,437.52 548.96,432.91 549.30,427.98 549.65,422.73 549.99,417.17 550.34,411.33 550.68,405.21 551.03,398.84 551.38,392.21 551.72,385.36 552.07,378.30 552.41,371.04 552.76,363.61 553.10,356.02 553.45,348.29 553.79,340.44 554.14,332.48 554.49,324.45 554.83,316.35 555.18,308.21 555.52,300.05 555.87,291.88 556.21,283.74 556.56,275.62 556.90,267.57 557.25,259.60 557.60,251.72 557.94,243.95 558.29,236.32 558.63,228.85 558.98,221.54 559.32,214.43 559.67,207.52 560.01,200.84 560.36,194.40 560.70,188.21 561.05,182.30 561.40,176.67 561.74,171.34 562.09,166.32 562.43,161.63 562.78,157.28 563.12,153.27 563.47,149.62 563.81,146.34 564.16,143.43 564.51,140.90 564.85,138.75 565.20,137.01 565.54,135.65 565.89,134.70 566.23,134.15 566.58,134.00 566.92,134.26 567.27,134.92 567.61,135.99 567.96,137.45 568.31,139.31 568.65,141.56 569.00,144.19 569.34,147.21 569.69,150.60 570.03,154.35 570.38,158.45 570.72,162.90 571.07,167.68 571.42,172.79 571.76,178.20 572.11,183.91 572.45,189.90 572.80,196.16 573.14,202.67 573.49,209.41 573.83,216.38 574.18,223.55 574.53,230.90 574.87,238.42 575.22,246.09 575.56,253.89 575.91,261.79 576.25,269.79 576.60,277.86 576.94,285.99 577.29,294.14 577.63,302.31 577.98,310.47 578.33,318.60 578.67,326.68 579.02,334.69 579.36,342.62 579.71,350.44 580.05,358.14 580.40,365.69 580.74,373.07 581.09,380.28 581.44,387.28 581.78,394.07 582.13,400.63 582.47,406.93 582.82,412.98 583.16,418.74 583.51,424.21 583.85,429.37 584.20,434.22 584.54,438.73 584.89,442.90 585.24,446.72 585.58,450.18 585.93,453.26 586.27,455.97 586.62,458.29 586.96,460.23 587.31,461.77 587.65,462.91 588.00,463.64 588.35,463.98 588.69,463.91 589.04,463.44 589.38,462.56 589.73,461.28 590.07,459.61 590.42,457.54 590.76,455.08 591.11,452.24 591.46,449.03 591.80,445.45 592.15,441.51 592.49,437.22 592.84,432.59 593.18,427.64 593.53,422.36 593.87,416.79 594.22,410.93 594.56,404.80 594.91,398.40 595.26,391.76 595.60,384.90 595.95,377.82 596.29,370.55 596.64,363.11 596.98,355.51 597.33,347.77 597.67,339.91 598.02,331.95 598.37,323.91 598.71,315.81 599.06,307.66 599.40,299.50 599.75,291.34 600.09,283.19 600.44,275.08 600.78,267.03 601.13,259.06 601.47,251.19 601.82,243.44 602.17,235.82 602.51,228.35 602.86,221.06 603.20,213.96 603.55,207.07 603.89,200.40 604.24,193.98 604.58,187.81 604.93,181.91 605.28,176.30 605.62,171.00 605.97,166.00 606.31,161.33 606.66,157.00 607.00,153.02 607.35,149.39 607.69,146.13 608.04,143.24 608.39,140.74 608.73,138.63 609.08,136.90 609.42,135.58 609.77,134.65 610.11,134.13 610.46,134.01 610.80,134.29 611.15,134.98 611.49,136.07 611.84,137.56 612.19,139.45 612.53,141.72 612.88,144.38 613.22,147.42 613.57,150.84 613.91,154.61 614.26,158.74 614.60,163.21 614.95,168.01 615.30,173.14 615.64,178.57 615.99,184.30 616.33,190.31 616.68,196.59 617.02,203.11 617.37,209.87 617.71,216.85 618.06,224.03 618.40,231.40 618.75,238.93 619.10,246.61 619.44,254.41 619.79,262.33 620.13,270.33 620.48,278.41 620.82,286.53 621.17,294.69 621.51,302.86 621.86,311.01 622.21,319.14 622.55,327.22 622.90,335.23 623.24,343.15 623.59,350.96 623.93,358.65 624.28,366.19 624.62,373.56 624.97,380.75 625.32,387.74 625.66,394.52 626.01,401.06 626.35,407.35 626.70,413.37 627.04,419.12 627.39,424.57 627.73,429.71 628.08,434.53 628.42,439.02 628.77,443.17 629.12,446.96 629.46,450.40 629.81,453.46 630.15,456.14 630.50,458.44 630.84,460.34 631.19,461.85 631.53,462.97 631.88,463.68 632.23,463.99 632.57,463.89 632.92,463.39 633.26,462.49 633.61,461.18 633.95,459.48 634.30,457.39 634.64,454.90 634.99,452.04 635.33,448.80 635.68,445.20 636.03,441.23 636.37,436.92 636.72,432.27 637.06,427.29 637.41,422.00 637.75,416.41 638.10,410.53 638.44,404.37 638.79,397.96 639.14,391.31 639.48,384.43 639.83,377.34 640.17,370.06 640.52,362.60 640.86,354.99 641.21,347.24 641.55,339.38 641.90,331.41 642.25,323.37 642.59,315.26 642.94,307.12 643.28,298.95 643.63,290.79 643.97,282.65 644.32,274.54 644.66,266.50 645.01,258.53 645.35,250.67 645.70,242.92 646.05,235.31 646.39,227.86 646.74,220.58 647.08,213.49 647.43,206.61 647.77,199.96 648.12,193.56 648.46,187.40 648.81,181.53 649.16,175.94 649.50,170.65 649.85,165.68 650.19,161.03 650.54,156.72 650.88,152.76 651.23,149.16 651.57,145.93 651.92,143.07 652.26,140.59 652.61,138.50 652.96,136.80 653.30,135.50 653.65,134.60 653.99,134.11 654.34,134.01 654.68,134.33 655.03,135.04 655.37,136.16 655.72,137.68 656.07,139.59 656.41,141.89 656.76,144.58 657.10,147.64 657.45,151.08 657.79,154.87 658.14,159.03 658.48,163.52 658.83,168.35 659.17,173.49 659.52,178.95 659.87,184.69 660.21,190.72 660.56,197.01 660.90,203.56 661.25,210.33 661.59,217.33 661.94,224.52 662.28,231.90 662.63,239.44 662.98,247.13 663.32,254.94 663.67,262.86 664.01,270.87 664.36,278.95 664.70,287.08 665.05,295.24 665.39,303.40 665.74,311.56 666.09,319.68 666.43,327.76 666.78,335.76 667.12,343.68 667.47,351.48 667.81,359.16 668.16,366.68 668.50,374.05 668.85,381.23 669.19,388.20 669.54,394.96 669.89,401.49 670.23,407.76 670.58,413.77 670.92,419.49 671.27,424.92 671.61,430.04 671.96,434.84 672.30,439.31 672.65,443.43 673.00,447.20 673.34,450.61 673.69,453.65 674.03,456.30 674.38,458.58 674.72,460.46 675.07,461.94 675.41,463.03 675.76,463.71 676.10,463.99 676.45,463.87 676.80,463.34 677.14,462.41 677.49,461.08 677.83,459.35 678.18,457.23 678.52,454.73 678.87,451.84 679.21,448.57 679.56,444.94 679.91,440.95 680.25,436.62 680.60,431.95 680.94,426.95 681.29,421.64 681.63,416.02 681.98,410.12 682.32,403.95 682.67,397.53 683.02,390.86 683.36,383.96 683.71,376.86 684.05,369.56 684.40,362.10 684.74,354.48 685.09,346.72 685.43,338.85 685.78,330.88 686.12,322.83 686.47,314.72 686.82,306.57 687.16,298.41 687.51,290.24 687.85,282.10 688.20,274.00 688.54,265.96 688.89,258.00 689.23,250.15 689.58,242.41 689.93,234.81 690.27,227.37 690.62,220.10 690.96,213.03 691.31,206.16 691.65,199.53 692.00,193.13 692.34,187.00 692.69,181.14 693.03,175.57 693.38,170.31 693.73,165.36 694.07,160.73 694.42,156.45 694.76,152.51 695.11,148.93 695.45,145.72 695.80,142.89 696.14,140.44 696.49,138.37 696.84,136.70 697.18,135.43 697.53,134.56 697.87,134.09 698.22,134.02 698.56,134.36 698.91,135.10 699.25,136.25 699.60,137.79 699.95,139.73 700.29,142.06 700.64,144.77 700.98,147.86 701.33,151.32 701.67,155.14 702.02,159.32 702.36,163.83 702.71,168.68 703.05,173.85 703.40,179.32 703.75,185.09 704.09,191.13 704.44,197.44 704.78,204.00 705.13,210.80 705.47,217.80 705.82,225.01 706.16,232.40 706.51,239.95 706.86,247.64 707.20,255.47 707.55,263.39 707.89,271.41 708.24,279.49 708.58,287.62 708.93,295.78 709.27,303.95 709.62,312.10 709.96,320.23 710.31,328.30 710.66,336.29 711.00,344.20 711.35,352.00 711.69,359.66 712.04,367.18 712.38,374.53 712.73,381.70 713.07,388.66 713.42,395.41 713.77,401.91 714.11,408.17 714.46,414.16 714.80,419.86 715.15,425.27 715.49,430.37 715.84,435.15 716.18,439.60 716.53,443.70 716.88,447.44 717.22,450.83 717.57,453.84 717.91,456.47 718.26,458.71 718.60,460.57 718.95,462.03 719.29,463.09 719.64,463.74 719.98,464.00 720.33,463.85 720.68,463.29 721.02,462.33 721.37,460.98 721.71,459.22 722.06,457.08 722.40,454.54 722.75,451.63 723.09,448.34 723.44,444.69 723.79,440.67 724.13,436.32 724.48,431.62 724.82,426.60 725.17,421.27 725.51,415.64 725.86,409.72 726.20,403.53 726.55,397.09 726.89,390.40 727.24,383.49 727.59,376.38 727.93,369.07 728.28,361.59 728.62,353.96 728.97,346.20 729.31,338.32 729.66,330.34 730.00,322.29 730.35,314.17 730.70,306.03 731.04,297.86 731.39,289.70 731.73,281.56 732.08,273.46 732.42,265.43 732.77,257.47 733.11,249.62 733.46,241.89 733.81,234.30 734.15,226.87 734.50,219.62 734.84,212.56 735.19,205.71 735.53,199.09 735.88,192.72 736.22,186.60 736.57,180.76 736.91,175.21 737.26,169.97 737.61,165.04 737.95,160.43 738.30,156.17 738.64,152.26 738.99,148.71 739.33,145.52 739.68,142.71 740.02,140.28 740.37,138.25 740.72,136.60 741.06,135.36 741.41,134.51 741.75,134.07 742.10,134.03 742.44,134.40 742.79,135.17 743.13,136.34 743.48,137.91 743.82,139.87 744.17,142.23 744.52,144.96 744.86,148.08 745.21,151.56 745.55,155.41 745.90,159.61 746.24,164.15 746.59,169.02 746.93,174.21 747.28,179.70 747.63,185.49 747.97,191.55 748.32,197.88 748.66,204.45 749.01,211.26 749.35,218.28 749.70,225.50 750.04,232.90 750.39,240.46 750.74,248.16 751.08,255.99 751.43,263.93 751.77,271.95 752.12,280.04 752.46,288.17 752.81,296.33 753.15,304.50 753.50,312.65 753.84,320.77 754.19,328.83 754.54,336.83 754.88,344.73 755.23,352.52 755.57,360.17 755.92,367.68 756.26,375.02 756.61,382.17 756.95,389.12 757.30,395.85 757.65,402.34 757.99,408.58 758.34,414.55 758.68,420.24 759.03,425.62 759.37,430.70 759.72,435.46 760.06,439.88 760.41,443.96 760.75,447.68 761.10,451.04 761.45,454.03 761.79,456.63 762.14,458.85 762.48,460.68 762.83,462.11 763.17,463.14 763.52,463.77 763.86,464.00 764.21,463.82 764.56,463.24 764.90,462.26 765.25,460.87 765.59,459.09 765.94,456.92 766.28,454.36 766.63,451.42 766.97,448.11 767.32,444.43 767.67,440.39 768.01,436.01 768.36,431.29 768.70,426.25 769.05,420.90 769.39,415.25 769.74,409.31 770.08,403.11 770.43,396.65 770.77,389.94 771.12,383.02 771.47,375.89 771.81,368.57 772.16,361.09 772.50,353.45 772.85,345.67 773.19,337.78 773.54,329.80 773.88,321.74 774.23,313.63 774.58,305.48 774.92,297.31 775.27,289.15 775.61,281.01 775.96,272.92 776.30,264.89 776.65,256.95 776.99,249.10 777.34,241.38 777.68,233.80 778.03,226.38 778.38,219.14 778.72,212.09 779.07,205.26 779.41,198.66 779.76,192.30 780.10,186.20 780.45,180.38 780.79,174.85 781.14,169.63 781.49,164.72 781.83,160.14 782.18,155.90 782.52,152.01 782.87,148.48 783.21,145.32 783.56,142.54 783.90,140.14 784.25,138.13 784.60,136.51 784.94,135.29 785.29,134.47 785.63,134.06 785.98,134.05 786.32,134.44 786.67,135.23 787.01,136.43 787.36,138.03 787.70,140.02 788.05,142.40 788.40,145.16 788.74,148.30 789.09,151.81 789.43,155.68 789.78,159.90 790.12,164.46 790.47,169.35 790.81,174.56 791.16,180.08 791.51,185.88 791.85,191.96 792.20,198.31 792.54,204.90 792.89,211.72 793.23,218.76 793.58,225.99 793.92,233.40 794.27,240.97 794.61,248.69 794.96,256.52 795.31,264.46 795.65,272.49 796.00,280.58 796.34,288.72 796.69,296.88 797.03,305.04 797.38,313.19 797.72,321.31 798.07,329.37 798.42,337.36 798.76,345.25 799.11,353.03 799.45,360.68 799.80,368.18 800.14,375.50 800.49,382.64 800.83,389.58 801.18,396.29 801.53,402.77 801.87,408.99 802.22,414.94 802.56,420.61 802.91,425.97 803.25,431.03 803.60,435.77 803.94,440.17 804.29,444.22 804.63,447.92 804.98,451.25 805.33,454.21 805.67,456.79 806.02,458.99 806.36,460.79 806.71,462.19 807.05,463.20 807.40,463.80 807.74,464.00 808.09,463.80 808.44,463.19 808.78,462.18 809.13,460.77 809.47,458.96 809.82,456.76 810.16,454.17 810.51,451.21 810.85,447.87 811.20,444.17 811.54,440.11 811.89,435.71 812.24,430.97 812.58,425.90 812.93,420.53 813.27,414.86 813.62,408.91 813.96,402.68 814.31,396.20 814.65,389.49 815.00,382.55" fill="none" stroke="#0072bd" stroke-width="1" shape-rendering="crispEdges"/>
<path d="M116.5 133 V464 M814.5 133 V464 M116 133.5 H815 M116 463.5 H815 M116.5 463 V457 M116.5 133 V141 M186.5 463 V457 M186.5 133 V141 M256.5 463 V457 M256.5 133 V141 M325.5 463 V457 M325.5 133 V141 M395.5 463 V457 M395.5 133 V141 M465.5 463 V457 M465.5 133 V141 M535.5 463 V457 M535.5 133 V141 M605.5 463 V457 M605.5 133 V141 M674.5 463 V457 M674.5 133 V141 M744.5 463 V457 M744.5 133 V141 M814.5 463 V457 M814.5 133 V141 M116 133.5 H124 M814 133.5 H807 M116 166.5 H124 M814 166.5 H807 M116 199.5 H124 M814 199.5 H807 M116 232.5 H124 M814 232.5 H807 M116 265.5 H124 M814 265.5 H807 M116 298.5 H124 M814 298.5 H807 M116 331.5 H124 M814 331.5 H807 M116 364.5 H124 M814 364.5 H807 M116 397.5 H124 M814 397.5 H807 M116 430.5 H124 M814 430.5 H807 M116 463.5 H124 M814 463.5 H807" stroke="#262626" stroke-width="1" shape-rendering="crispEdges"/>
</svg>
<div style="position:absolute;left:114px;top:131px;width:7px;height:7px;background:rgba(206,236,255,0.72);border:1.5px solid #0b5ea8;box-sizing:border-box"></div>
<div style="position:absolute;left:114px;top:296px;width:7px;height:7px;background:rgba(206,236,255,0.72);border:1.5px solid #0b5ea8;box-sizing:border-box"></div>
<div style="position:absolute;left:114px;top:461px;width:7px;height:7px;background:rgba(206,236,255,0.72);border:1.5px solid #0b5ea8;box-sizing:border-box"></div>
<div style="position:absolute;left:463px;top:131px;width:7px;height:7px;background:rgba(206,236,255,0.72);border:1.5px solid #0b5ea8;box-sizing:border-box"></div>
<div style="position:absolute;left:463px;top:461px;width:7px;height:7px;background:rgba(206,236,255,0.72);border:1.5px solid #0b5ea8;box-sizing:border-box"></div>
<div style="position:absolute;left:812px;top:131px;width:7px;height:7px;background:rgba(206,236,255,0.72);border:1.5px solid #0b5ea8;box-sizing:border-box"></div>
<div style="position:absolute;left:812px;top:296px;width:7px;height:7px;background:rgba(206,236,255,0.72);border:1.5px solid #0b5ea8;box-sizing:border-box"></div>
<div style="position:absolute;left:812px;top:461px;width:7px;height:7px;background:rgba(206,236,255,0.72);border:1.5px solid #0b5ea8;box-sizing:border-box"></div>
<div class="t" style="left:113.10px;top:470.05px;font-size:14px;letter-spacing:0.000px;font-weight:normal;color:#262626;will-change:transform;">0</div>
<div class="t" style="left:178.51px;top:470.05px;font-size:14px;letter-spacing:0.000px;font-weight:normal;color:#262626;will-change:transform;">10</div>
<div class="t" style="left:248.81px;top:470.05px;font-size:14px;letter-spacing:0.000px;font-weight:normal;color:#262626;will-change:transform;">20</div>
<div class="t" style="left:318.61px;top:470.05px;font-size:14px;letter-spacing:0.000px;font-weight:normal;color:#262626;will-change:transform;">30</div>
<div class="t" style="left:388.41px;top:470.05px;font-size:14px;letter-spacing:0.000px;font-weight:normal;color:#262626;will-change:transform;">40</div>
<div class="t" style="left:458.21px;top:470.05px;font-size:14px;letter-spacing:0.000px;font-weight:normal;color:#262626;will-change:transform;">50</div>
<div class="t" style="left:528.01px;top:470.05px;font-size:14px;letter-spacing:0.000px;font-weight:normal;color:#262626;will-change:transform;">60</div>
<div class="t" style="left:597.81px;top:470.05px;font-size:14px;letter-spacing:0.000px;font-weight:normal;color:#262626;will-change:transform;">70</div>
<div class="t" style="left:667.61px;top:470.05px;font-size:14px;letter-spacing:0.000px;font-weight:normal;color:#262626;will-change:transform;">80</div>
<div class="t" style="left:737.41px;top:470.05px;font-size:14px;letter-spacing:0.000px;font-weight:normal;color:#262626;will-change:transform;">90</div>
<div class="t" style="left:802.81px;top:470.05px;font-size:14px;letter-spacing:0.000px;font-weight:normal;color:#262626;will-change:transform;">100</div>
<div class="t" style="left:103.60px;top:127.25px;font-size:14px;letter-spacing:0.000px;font-weight:normal;color:#262626;will-change:transform;">1</div>
<div class="t" style="left:91.92px;top:160.25px;font-size:14px;letter-spacing:0.000px;font-weight:normal;color:#262626;will-change:transform;">0.8</div>
<div class="t" style="left:91.92px;top:193.25px;font-size:14px;letter-spacing:0.000px;font-weight:normal;color:#262626;will-change:transform;">0.6</div>
<div class="t" style="left:91.92px;top:226.25px;font-size:14px;letter-spacing:0.000px;font-weight:normal;color:#262626;will-change:transform;">0.4</div>
<div class="t" style="left:91.92px;top:259.25px;font-size:14px;letter-spacing:0.000px;font-weight:normal;color:#262626;will-change:transform;">0.2</div>
<div class="t" style="left:103.60px;top:292.25px;font-size:14px;letter-spacing:0.000px;font-weight:normal;color:#262626;will-change:transform;">0</div>
<div class="t" style="left:87.26px;top:325.25px;font-size:14px;letter-spacing:0.000px;font-weight:normal;color:#262626;will-change:transform;">-0.2</div>
<div class="t" style="left:87.26px;top:358.25px;font-size:14px;letter-spacing:0.000px;font-weight:normal;color:#262626;will-change:transform;">-0.4</div>
<div class="t" style="left:87.26px;top:391.25px;font-size:14px;letter-spacing:0.000px;font-weight:normal;color:#262626;will-change:transform;">-0.6</div>
<div class="t" style="left:87.26px;top:424.25px;font-size:14px;letter-spacing:0.000px;font-weight:normal;color:#262626;will-change:transform;">-0.8</div>
<div class="t" style="left:98.94px;top:457.25px;font-size:14px;letter-spacing:0.000px;font-weight:normal;color:#262626;will-change:transform;">-1</div>
<div style="position:absolute;left:0px;top:508px;width:900px;height:242px;background:#ebeaef"></div>
<div style="position:absolute;left:1px;top:513px;width:898px;height:214px;border:1px solid #c6c6ca;border-top-color:#b8b8bc;box-sizing:border-box"></div>
<div style="position:absolute;left:2px;top:514px;width:896px;height:18px;background:linear-gradient(#fefeff,#f8f8fa 35%,#e6e6ea)"></div>
<div class="t" style="left:7.60px;top:516.02px;font-size:12.5px;letter-spacing:0.457px;font-weight:bold;color:#342c30;transform:scaleX(1.0783);transform-origin:0 0;">Property Editor - Axes</div>
<svg style="position:absolute;left:880px;top:515px" width="16" height="16">
<circle cx="7" cy="7" r="5.5" fill="none" stroke="#505050" stroke-width="1"/>
<path d="M4.3 5.5 H9.7 L7 9.3 Z" fill="#404040"/></svg>
<div style="position:absolute;left:2px;top:532px;width:895px;height:193px;border:1px solid #8e8e92;box-sizing:border-box;box-shadow:inset 1px 1px 0 #fff, 1px 1px 0 #fff"></div>
<div class="t" style="left:10.20px;top:544.04px;font-size:12px;letter-spacing:0.308px;font-weight:normal;color:#0c0810;transform:scaleX(1.0649);transform-origin:0 0;">Title:</div>
<div style="position:absolute;left:57px;top:542px;width:179px;height:90px;background:#fff;border:1px solid #7a7a7e;box-sizing:border-box;box-shadow:1px 1px 0 #fff"></div>
<div class="t" style="left:10.20px;top:646.84px;font-size:12px;letter-spacing:0.303px;font-weight:normal;color:#0c0810;transform:scaleX(1.0508);transform-origin:0 0;">Colors:</div>
<div style="position:absolute;left:57px;top:639px;width:37px;height:26px;background:linear-gradient(#fbfbfc,#eeeef0 50%,#d8d8dc);border:1px solid #8a8a8e;box-sizing:border-box;box-shadow:1px 1px 0 #fff, inset 1px 1px 0 #fff"></div>
<div style="position:absolute;left:100px;top:639px;width:37px;height:26px;background:linear-gradient(#fbfbfc,#eeeef0 50%,#d8d8dc);border:1px solid #8a8a8e;box-sizing:border-box;box-shadow:1px 1px 0 #fff, inset 1px 1px 0 #fff"></div>
<svg style="position:absolute;left:57px;top:639px" width="80" height="26">
<defs><linearGradient id="bk" x1="0" y1="0" x2="1" y2="1"><stop offset="0" stop-color="#ffffff"/><stop offset="1" stop-color="#808080"/></linearGradient></defs>
<path d="M10.5 9.5 Q10.5 4.5 13 4.5 Q15.5 4.5 15.5 8.5" stroke="#000" stroke-width="1" fill="none"/>
<path d="M13 6 L18.5 11.5 L13 17 L7.5 11.5 Z" fill="url(#bk)" stroke="#000" stroke-width="1.1"/>
<path d="M13 7 V11" stroke="#000" stroke-width="1"/>
<path d="M16.5 9 Q19 8.5 20.5 10.5 V15 L18.5 13.5 Z" fill="#1028a0"/>
<rect x="6" y="17" width="18" height="3.5" fill="#fff"/>
<path d="M26.8 12.2 H32 L29.4 15 Z" fill="#222"/>
<path d="M54.5 16 L62.5 6.5" stroke="#000" stroke-width="3" stroke-linecap="round"/>
<path d="M55.5 15 L62 7.5" stroke="#fff" stroke-width="0.9"/>
<path d="M61 6.5 L63 4.5 L65 5.5 L63 8 Z" fill="#f8e020" stroke="#000" stroke-width="0.5"/>
<rect x="49" y="14.5" width="4" height="1.2" fill="#222"/>
<rect x="49" y="17.3" width="18" height="3.3" fill="#222"/>
<path d="M70.2 12.2 H75.2 L72.7 15 Z" fill="#222"/>
</svg>
<div class="t" style="left:10.20px;top:676.04px;font-size:12px;letter-spacing:0.162px;font-weight:normal;color:#0c0810;transform:scaleX(1.0259);transform-origin:0 0;">Grid:</div>
<div style="position:absolute;left:57px;top:675px;width:12px;height:12px;background:#ebeaef;border:1px solid #8a8a8e;box-sizing:border-box;box-shadow:1px 1px 0 #fff"></div>
<div class="t" style="left:73.50px;top:676.04px;font-size:12px;letter-spacing:0.000px;font-weight:normal;color:#0c0810;">X</div>
<div style="position:absolute;left:84px;top:675px;width:12px;height:12px;background:#ebeaef;border:1px solid #8a8a8e;box-sizing:border-box;box-shadow:1px 1px 0 #fff"></div>
<div class="t" style="left:100.70px;top:676.04px;font-size:12px;letter-spacing:0.000px;font-weight:normal;color:#0c0810;">Y</div>
<div style="position:absolute;left:111px;top:675px;width:12px;height:12px;background:#ebeaef;border:1px solid #8a8a8e;box-sizing:border-box;box-shadow:1px 1px 0 #fff"></div>
<div class="t" style="left:128.80px;top:676.04px;font-size:12px;letter-spacing:0.000px;font-weight:normal;color:#0c0810;">Z</div>
<div class="t" style="left:10.20px;top:700.84px;font-size:12px;letter-spacing:0.080px;font-weight:normal;color:#0c0810;transform:scaleX(1.0078);transform-origin:0 0;">Box</div>
<div style="position:absolute;left:57px;top:700px;width:12px;height:12px;background:#ebeaef;border:1px solid #8a8a8e;box-sizing:border-box;box-shadow:1px 1px 0 #fff"></div>
<svg style="position:absolute;left:57px;top:700px" width="12" height="12"><path d="M2.3 5.6 L3.8 4.3 L5.9 6.6 L8.9 2.4 L10.1 3.6 L6 9.6 Z" fill="#000"/></svg>
<div class="t" style="left:74.00px;top:700.84px;font-size:12px;letter-spacing:0.320px;font-weight:normal;color:#0c0810;transform:scaleX(1.0320);transform-origin:0 0;">Box</div>
<svg style="position:absolute;left:240px;top:538px" width="510" height="185">
<path d="M6.5 24 L6.5 23 Q8 10 11.5 5.5 Q13 4.5 15 4.5 H54 Q56 4.5 57 6 Q59 13 59.5 22.5" fill="none" stroke="#fff" stroke-width="1"/>
<path d="M54 4.5 Q56 4.5 57 6 Q59 13 59.5 22.5" fill="none" stroke="#76767a" stroke-width="1"/>
<path d="M59.5 23 Q61 10 63 6.5 Q64 5.5 66 5.5 H100 Q102 5.5 103 7 Q104.5 13 105 22.5" fill="none" stroke="#fff" stroke-width="1"/>
<path d="M100 5.5 Q102 5.5 103 7 Q104.5 13 105 22.5" fill="none" stroke="#76767a" stroke-width="1"/>
<path d="M105 23 Q106.5 10 108.5 6.5 Q109.5 5.5 111.5 5.5 H148 Q150 5.5 151 7 Q152.5 13 153 22.5" fill="none" stroke="#fff" stroke-width="1"/>
<path d="M148 5.5 Q150 5.5 151 7 Q152.5 13 153 22.5" fill="none" stroke="#76767a" stroke-width="1"/>
<path d="M153 23 Q154.5 10 156.5 6.5 Q157.5 5.5 159.5 5.5 H191 Q193 5.5 194 7 Q195.5 13 196 22.5" fill="none" stroke="#fff" stroke-width="1"/>
<path d="M191 5.5 Q193 5.5 194 7 Q195.5 13 196 22.5" fill="none" stroke="#76767a" stroke-width="1"/>
</svg>
<div style="position:absolute;left:244px;top:561px;width:498px;height:158px;border:1px solid #fff;border-right-color:#76767a;border-bottom-color:#76767a;box-sizing:border-box"></div>
<div style="position:absolute;left:246px;top:563px;width:493px;height:153px;border:1px solid #76767a;box-sizing:border-box;box-shadow:1px 1px 0 #fff"></div>
<div class="t" style="left:255.50px;top:546.34px;font-size:12px;letter-spacing:0.059px;font-weight:normal;color:#0c0810;transform:scaleX(1.0087);transform-origin:0 0;">X Axis</div>
<div class="t" style="left:302.60px;top:547.14px;font-size:12px;letter-spacing:0.019px;font-weight:normal;color:#0c0810;transform:scaleX(1.0028);transform-origin:0 0;">Y Axis</div>
<div class="t" style="left:350.50px;top:547.14px;font-size:12px;letter-spacing:0.191px;font-weight:normal;color:#0c0810;transform:scaleX(1.0295);transform-origin:0 0;">Z Axis</div>
<div class="t" style="left:399.50px;top:547.14px;font-size:12px;letter-spacing:0.230px;font-weight:normal;color:#0c0810;transform:scaleX(1.0288);transform-origin:0 0;">Font</div>
<div class="t" style="left:253.20px;top:572.04px;font-size:12px;letter-spacing:0.227px;font-weight:normal;color:#0c0810;transform:scaleX(1.0378);transform-origin:0 0;">X Label:</div>
<div style="position:absolute;left:353px;top:573px;width:296px;height:50px;background:#fff;border:1px solid #7a7a7e;box-sizing:border-box;box-shadow:1px 1px 0 #fff"></div>
<div style="position:absolute;left:657px;top:587px;width:76px;height:21px;background:linear-gradient(#fbfbfc,#eeeef0 50%,#d8d8dc);border:1px solid #8a8a8e;box-sizing:border-box;box-shadow:1px 1px 0 #fff, inset 1px 1px 0 #fff"></div>
<div class="t" style="left:674.00px;top:592.04px;font-size:12px;letter-spacing:0.308px;font-weight:normal;color:#0c0810;transform:scaleX(1.0615);transform-origin:0 0;">Ticks...</div>
<div class="t" style="left:253.20px;top:634.04px;font-size:12px;letter-spacing:0.201px;font-weight:normal;color:#0c0810;transform:scaleX(1.0364);transform-origin:0 0;">X Limits:</div>
<div style="position:absolute;left:353px;top:629px;width:128px;height:22px;background:#fff;border:1px solid #7a7a7e;box-sizing:border-box;box-shadow:1px 1px 0 #fff"></div>
<div class="t" style="left:357.00px;top:634.34px;font-size:12px;letter-spacing:0.000px;font-weight:normal;color:#0c0810;">0</div>
<div class="t" style="left:487.00px;top:634.34px;font-size:12px;letter-spacing:0.771px;font-weight:normal;color:#0c0810;transform:scaleX(1.0806);transform-origin:0 0;">to</div>
<div style="position:absolute;left:505px;top:629px;width:144px;height:22px;background:#fff;border:1px solid #7a7a7e;box-sizing:border-box;box-shadow:1px 1px 0 #fff"></div>
<div class="t" style="left:509.00px;top:634.34px;font-size:12px;letter-spacing:0.397px;font-weight:normal;color:#0c0810;transform:scaleX(1.0406);transform-origin:0 0;">100</div>
<div style="position:absolute;left:652px;top:633px;width:12px;height:12px;background:#ebeaef;border:1px solid #8a8a8e;box-sizing:border-box;box-shadow:1px 1px 0 #fff"></div>
<svg style="position:absolute;left:652px;top:633px" width="12" height="12"><path d="M2.3 5.6 L3.8 4.3 L5.9 6.6 L8.9 2.4 L10.1 3.6 L6 9.6 Z" fill="#000"/></svg>
<div class="t" style="left:669.00px;top:634.34px;font-size:12px;letter-spacing:0.470px;font-weight:normal;color:#0c0810;transform:scaleX(1.0597);transform-origin:0 0;">Auto</div>
<div class="t" style="left:253.20px;top:662.34px;font-size:12px;letter-spacing:0.183px;font-weight:normal;color:#0c0810;transform:scaleX(1.0298);transform-origin:0 0;">X Scale:</div>
<div style="position:absolute;left:353px;top:657px;width:296px;height:22px;background:linear-gradient(#fbfbfc,#eeeef0 50%,#d8d8dc);border:1px solid #8a8a8e;box-sizing:border-box;box-shadow:1px 1px 0 #fff, inset 1px 1px 0 #fff"></div>
<svg style="position:absolute;left:637px;top:665px" width="10" height="6"><path d="M0.5 0.5 H9 L4.75 4.8 Z" fill="#111"/></svg>
<div class="t" style="left:356.40px;top:662.34px;font-size:12px;letter-spacing:0.482px;font-weight:normal;color:#0c0810;transform:scaleX(1.0894);transform-origin:0 0;">linear</div>
<div style="position:absolute;left:652px;top:661px;width:12px;height:12px;background:#ebeaef;border:1px solid #8a8a8e;box-sizing:border-box;box-shadow:1px 1px 0 #fff"></div>
<div class="t" style="left:669.00px;top:662.34px;font-size:12px;letter-spacing:0.394px;font-weight:normal;color:#0c0810;transform:scaleX(1.0554);transform-origin:0 0;">Reverse</div>
<div class="t" style="left:253.20px;top:690.34px;font-size:12px;letter-spacing:0.294px;font-weight:normal;color:#0c0810;transform:scaleX(1.0542);transform-origin:0 0;">X Axis Location:</div>
<div style="position:absolute;left:353px;top:685px;width:296px;height:22px;background:linear-gradient(#fbfbfc,#eeeef0 50%,#d8d8dc);border:1px solid #8a8a8e;box-sizing:border-box;box-shadow:1px 1px 0 #fff, inset 1px 1px 0 #fff"></div>
<svg style="position:absolute;left:637px;top:693px" width="10" height="6"><path d="M0.5 0.5 H9 L4.75 4.8 Z" fill="#111"/></svg>
<div class="t" style="left:356.40px;top:690.34px;font-size:12px;letter-spacing:0.632px;font-weight:normal;color:#0c0810;transform:scaleX(1.0942);transform-origin:0 0;">bottom</div>
<div style="position:absolute;left:747px;top:542px;width:145px;height:21px;background:linear-gradient(#fbfbfc,#eeeef0 50%,#d8d8dc);border:1px solid #8a8a8e;box-sizing:border-box;box-shadow:1px 1px 0 #fff, inset 1px 1px 0 #fff"></div>
<div class="t" style="left:764.00px;top:547.04px;font-size:12px;letter-spacing:0.433px;font-weight:normal;color:#0c0810;transform:scaleX(1.0840);transform-origin:0 0;">More Properties...</div>
</body></html>
